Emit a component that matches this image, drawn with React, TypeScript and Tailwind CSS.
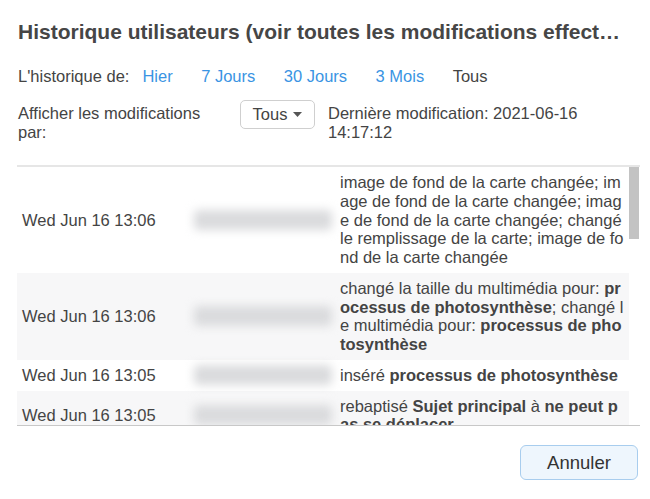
import type { ReactNode } from 'react';

// History rows — the name column is blurred in the reference, so it is drawn as a soft grey bar
type Row = { date: string; text: ReactNode; striped?: boolean };

const B = ({ children }: { children: ReactNode }) => <b className="font-bold">{children}</b>;

const ROWS: Row[] = [
  {
    date: 'Wed Jun 16 13:06',
    text: 'image de fond de la carte changée; image de fond de la carte changée; image de fond de la carte changée; changé le remplissage de la carte; image de fond de la carte changée',
  },
  {
    date: 'Wed Jun 16 13:06',
    striped: true,
    text: (
      <>
        changé la taille du multimédia pour: <B>processus de photosynthèse</B>; changé le multimédia pour:{' '}
        <B>processus de photosynthèse</B>
      </>
    ),
  },
  {
    date: 'Wed Jun 16 13:05',
    text: (
      <>
        inséré <B>processus de photosynthèse</B>
      </>
    ),
  },
  {
    date: 'Wed Jun 16 13:05',
    striped: true,
    text: (
      <>
        rebaptisé <B>Sujet principal</B> à <B>ne peut pas se déplacer</B>
      </>
    ),
  },
];

const LINKS = ['Hier', '7 Jours', '30 Jours', '3 Mois'];

function HistoryRow({ row }: { row: Row }) {
  return (
    <div className={`flex items-stretch ${row.striped ? 'bg-[#f7f7f8]' : 'bg-white'}`}>
      <div className="w-[171px] shrink-0 pl-[5px] flex items-center">{row.date}</div>
      <div className="w-[152px] shrink-0 flex items-center pl-[6px]">
        <div className="h-[20px] w-[138px] bg-[#dadbdd] blur-[5px] rounded" />
      </div>
      <div className="w-[287px] shrink-0 py-[6px] break-all leading-[18.75px]">{row.text}</div>
    </div>
  );
}

export default function App() {
  return (
    <div className="w-[650px] h-[499px] bg-white text-[#444] text-[16.5px] font-['Liberation_Sans',Arial,sans-serif] overflow-hidden">
      <h1 className="pl-[18px] pr-[22px] pt-[20px] text-[21px] leading-[24px] font-bold truncate text-[#464646]">
        Historique utilisateurs (voir toutes les modifications effectuées par les utilisateurs)
      </h1>

      <div className="flex items-center pl-[18px] mt-[23px] leading-[18px]">
        <span>L'historique de:</span>
        <div className="flex items-center gap-[28.5px] ml-[13px]">
          {LINKS.map((l) => (
            <span key={l} className="text-[#3a94e3]">
              {l}
            </span>
          ))}
          <span>Tous</span>
        </div>
      </div>

      <div className="flex items-start pl-[18px] mt-[19px] leading-[19px]">
        <div className="w-[222px] shrink-0">
          Afficher les modifications
          <br />
          par:
        </div>
        <button className="mt-[-4px] h-[29px] w-[75px] shrink-0 flex items-center justify-center gap-[6px] border border-[#cfcfcf] rounded-[5px] text-[16.5px] text-[#444]">
          Tous
          <svg width="9" height="5" viewBox="0 0 9 5">
            <path d="M0 0h9L4.5 5z" fill="#555" />
          </svg>
        </button>
        <div className="ml-[13px]">
          Dernière modification: 2021-06-16
          <br />
          14:17:12
        </div>
      </div>

      {/* table with its scrollbar column */}
      <div className="ml-[17px] w-[623px] mt-[23px] h-[261px] flex border-t-2 border-[#e6e6e6] border-b border-b-[#c8c8c8]">
        <div className="w-[612px] overflow-hidden">
          {ROWS.map((r, i) => (
            <HistoryRow key={i} row={r} />
          ))}
        </div>
        <div className="w-[11px] bg-white">
          <div className="h-[72px] w-[10px] bg-[#c3c3c3]" />
        </div>
      </div>

      <div className="flex justify-end pr-[12px] mt-[19px]">
        <button className="h-[35px] w-[118px] rounded-[6px] border border-[#a8cdee] bg-[#eef6fd] text-[18.5px] text-[#333]">
          Annuler
        </button>
      </div>
    </div>
  );
}
